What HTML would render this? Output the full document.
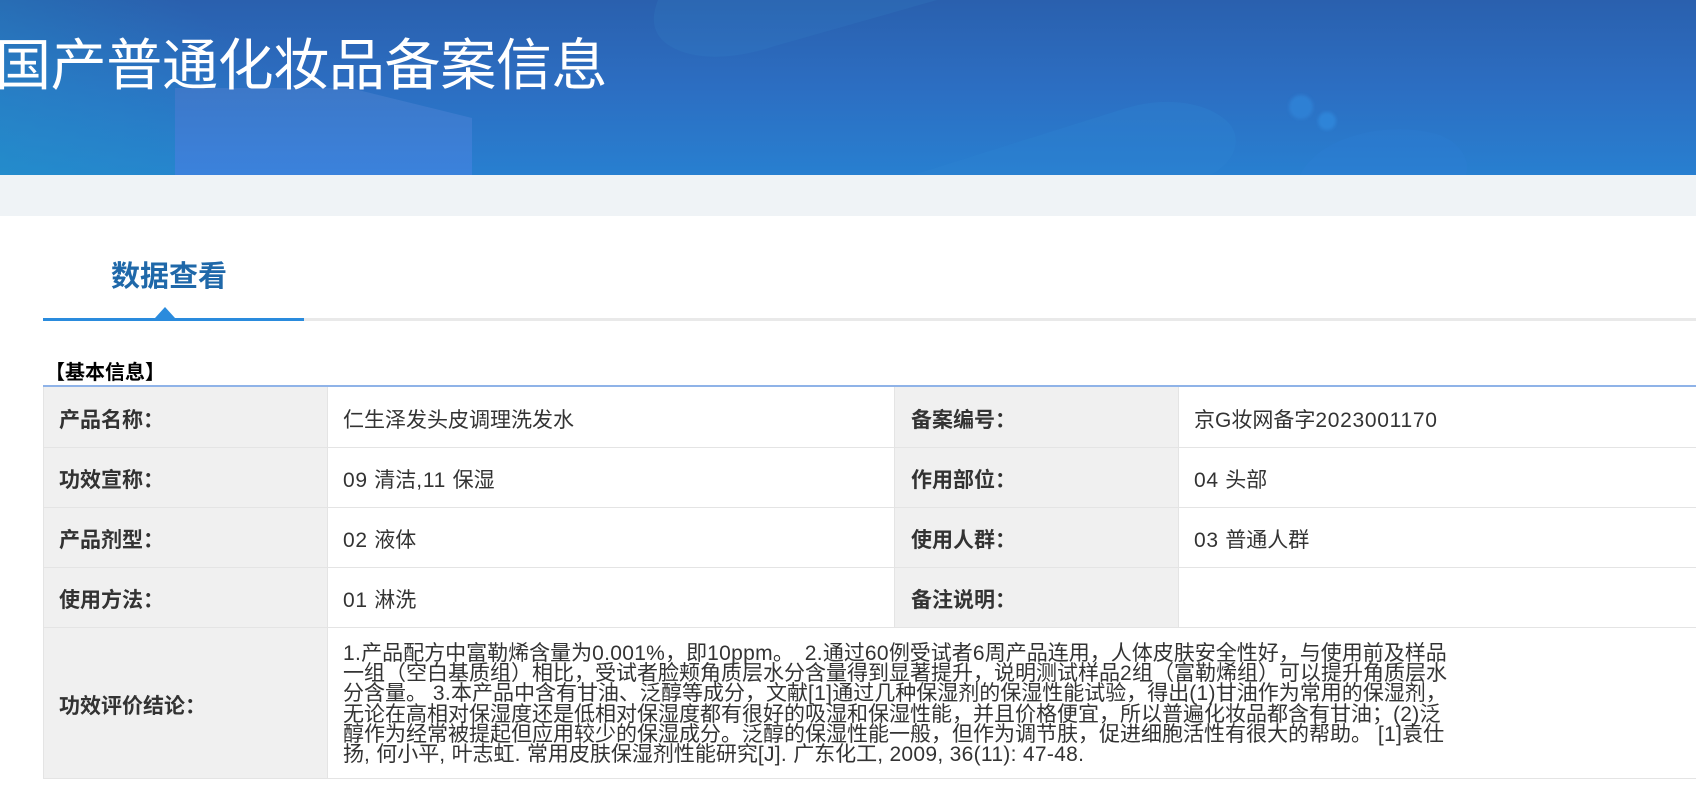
<!DOCTYPE html>
<html lang="zh-CN">
<head>
<meta charset="utf-8">
<title>国产普通化妆品备案信息</title>
<style>
html,body{margin:0;padding:0;width:1696px;height:800px;overflow:hidden;background:#fff}
body{position:relative;font-family:"Liberation Sans","Noto Sans CJK SC",sans-serif;color:#333}
.a{position:absolute;white-space:nowrap}
.band{left:0;top:175px;width:1696px;height:41px;background:#eff3f6}
.head{left:0;top:0;width:1696px;height:175px;display:block}
.title{left:-5px;top:26px;font-size:56px;line-height:80px;color:#fff;font-weight:400;letter-spacing:-.35px}
.tab{left:111px;top:257px;font-size:29px;line-height:40px;font-weight:700;color:#1f68a9}
.l0{left:43px;top:318px;width:1653px;height:3px;background:#e9e9e9}
.l1{left:43px;top:318px;width:261px;height:3px;background:#2a8bdd}
.tri{left:155px;top:307px;width:0;height:0;border-left:10px solid transparent;border-right:10px solid transparent;border-bottom:11px solid #2a8bdd}
.sec{left:45px;top:358px;font-size:20px;line-height:30px;font-weight:700;color:#000}
.blue{left:43px;top:385px;width:1653px;height:2px;background:#8fb3e8}
.bg{background:#f0f0f0}
.h{height:1px;left:43px;width:1653px;background:#e4e4e4}
.v{width:1px;background:#e4e4e4}
.t{font-size:21px;line-height:30px;color:#333}
.b{font-weight:700;left:59px}
.p{font-size:21px;line-height:20.2px;color:#333;left:343px;top:644px}
i{font-style:normal;letter-spacing:.7px}
.p i{letter-spacing:.3px}
</style>
</head>
<body>
<svg class="a head" viewBox="0 0 1696 175" xmlns="http://www.w3.org/2000/svg">
<defs>
<linearGradient id="g" x1="0" y1="0" x2="0" y2="1">
<stop offset="0" stop-color="#2a60ae"/>
<stop offset=".5" stop-color="#2c6ec2"/>
<stop offset="1" stop-color="#287fd0"/>
</linearGradient>
<linearGradient id="l" gradientUnits="userSpaceOnUse" x1="0" y1="175" x2="150" y2="-25">
<stop offset="0" stop-color="#2096c8" stop-opacity=".55"/>
<stop offset="1" stop-color="#2096c8" stop-opacity="0"/>
</linearGradient>
<linearGradient id="r" x1="0" y1="0" x2="0" y2="1">
<stop offset="0" stop-color="#3d78c8"/>
<stop offset="1" stop-color="#3b82dc"/>
</linearGradient>
<filter id="f"><feGaussianBlur stdDeviation="1.5"/></filter>
</defs>
<rect width="1696" height="175" fill="url(#g)"/>
<rect width="1696" height="175" fill="url(#l)"/>
<path d="M658 0C648 25 655 45 690 54C715 60 745 56 775 46L937 0Z" fill="#3a8ccf" fill-opacity=".16"/>
<path d="M175 175V88L350 88L472 118V175Z" fill="url(#r)"/>
<path d="M913 175L1120 110C1160 96 1205 100 1228 122C1245 140 1232 165 1210 175Z" fill="#2f84d2" fill-opacity=".35"/>
<path d="M1300 175C1320 135 1390 120 1440 135C1465 145 1470 165 1466 175Z" fill="#2f7fd8" fill-opacity=".25"/>
<ellipse cx="1301" cy="107" rx="12" ry="12" fill="#2f80d4" filter="url(#f)"/>
<ellipse cx="1327" cy="121" rx="9" ry="9" fill="#2f84d8" filter="url(#f)"/>
</svg>
<div class="a title">国产普通化妆品备案信息</div>
<div class="a band"></div>

<div class="a tab">数据查看</div>
<div class="a l0"></div>
<div class="a l1"></div>
<div class="a tri"></div>

<div class="a sec">【基本信息】</div>

<div class="a bg" style="left:43px;top:387px;width:285px;height:391px"></div>
<div class="a bg" style="left:895px;top:387px;width:284px;height:240px"></div>
<div class="a h" style="top:447px"></div>
<div class="a h" style="top:507px"></div>
<div class="a h" style="top:567px"></div>
<div class="a h" style="top:627px"></div>
<div class="a h" style="top:778px"></div>
<div class="a v" style="left:43px;top:387px;height:392px"></div>
<div class="a v" style="left:327px;top:387px;height:392px"></div>
<div class="a v" style="left:894px;top:387px;height:240px"></div>
<div class="a v" style="left:1178px;top:387px;height:240px"></div>
<div class="a blue"></div>

<div class="a t b" style="top:406px">产品名称&#xFF1A;</div>
<div class="a t" style="left:343px;top:406px">仁生泽发头皮调理洗发水</div>
<div class="a t b" style="left:911px;top:406px">备案编号&#xFF1A;</div>
<div class="a t" style="left:1194px;top:406px">京G妆网备字<i>2023001170</i></div>

<div class="a t b" style="top:466px">功效宣称&#xFF1A;</div>
<div class="a t" style="left:343px;top:466px"><i>09 </i>清洁<i>,11 </i>保湿</div>
<div class="a t b" style="left:911px;top:466px">作用部位&#xFF1A;</div>
<div class="a t" style="left:1194px;top:466px"><i>04 </i>头部</div>

<div class="a t b" style="top:526px">产品剂型&#xFF1A;</div>
<div class="a t" style="left:343px;top:526px"><i>02 </i>液体</div>
<div class="a t b" style="left:911px;top:526px">使用人群&#xFF1A;</div>
<div class="a t" style="left:1194px;top:526px"><i>03 </i>普通人群</div>

<div class="a t b" style="top:586px">使用方法&#xFF1A;</div>
<div class="a t" style="left:343px;top:586px"><i>01 </i>淋洗</div>
<div class="a t b" style="left:911px;top:586px">备注说明&#xFF1A;</div>

<div class="a t b" style="top:692px">功效评价结论&#xFF1A;</div>
<div class="a p"><i>1.</i>产品配方中富勒烯含量为<i>0.001%</i>&#xFF0C;即<i>10ppm</i>。 <i style="margin-left:5px">2.</i>通过<i>60</i>例受试者<i>6</i>周产品连用&#xFF0C;人体皮肤安全性好&#xFF0C;与使用前及样品<br>一组&#xFF08;空白基质组&#xFF09;相比&#xFF0C;受试者脸颊角质层水分含量得到显著提升&#xFF0C;说明测试样品<i>2</i>组&#xFF08;富勒烯组&#xFF09;可以提升角质层水<br>分含量。 <i>3.</i>本产品中含有甘油、泛醇等成分&#xFF0C;文献<i>[1]</i>通过几种保湿剂的保湿性能试验&#xFF0C;得出<i>(1)</i>甘油作为常用的保湿剂&#xFF0C;<br>无论在高相对保湿度还是低相对保湿度都有很好的吸湿和保湿性能&#xFF0C;并且价格便宜&#xFF0C;所以普遍化妆品都含有甘油&#xFF1B;<i>(2)</i>泛<br>醇作为经常被提起但应用较少的保湿成分。泛醇的保湿性能一般&#xFF0C;但作为调节肤&#xFF0C;促进细胞活性有很大的帮助。 <i>[1]</i>袁仕<br>扬<i>, </i>何小平<i>, </i>叶志虹<i>. </i>常用皮肤保湿剂性能研究<i>[J]. </i>广东化工<i>, 2009, 36(11): 47-48.</i></div>
</body>
</html>
